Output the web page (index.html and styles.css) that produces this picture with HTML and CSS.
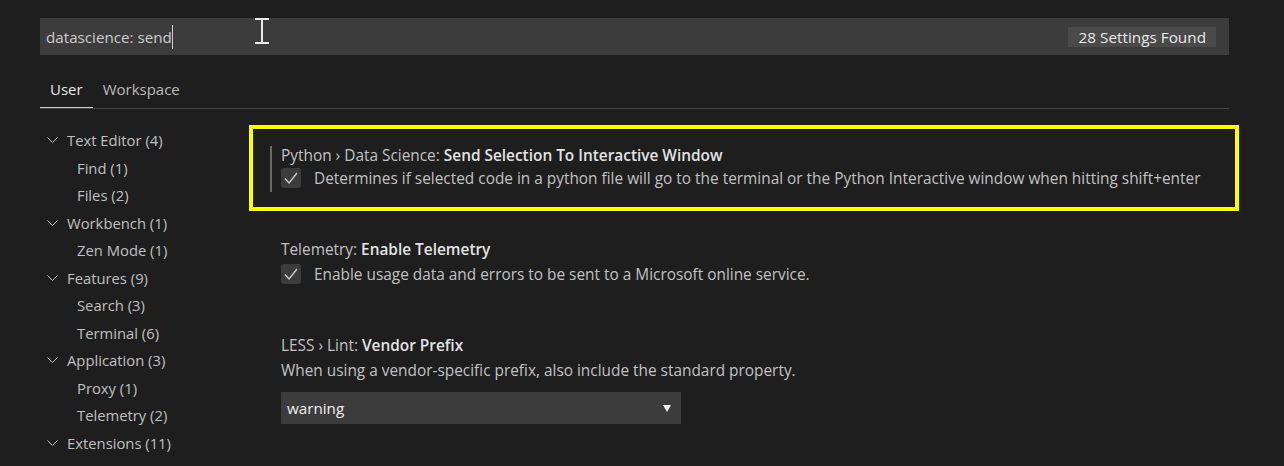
FILE: index.html
```html
<!DOCTYPE html>
<html>
<head>
<meta charset="utf-8">
<link rel="stylesheet" href="styles.css">
</head>
<body>
<div class="editor">
  <div class="search">
    <span class="query">datascience: send</span><span class="caret"></span>
    <span class="count">28 Settings Found</span>
  </div>
  <div class="tabs">
    <span class="tab active">User</span>
    <span class="tab">Workspace</span>
  </div>
  <div class="main">
    <ul class="toc">
      <li class="group"><span class="chev"><svg width="11" height="7" viewBox="0 0 11 7"><polyline points="0.5,0.5 5.5,5.5 10.5,0.5" fill="none" stroke="#c5c5c5" stroke-width="1"/></svg></span>Text Editor (4)</li>
      <li class="child">Find (1)</li>
      <li class="child">Files (2)</li>
      <li class="group"><span class="chev"><svg width="11" height="7" viewBox="0 0 11 7"><polyline points="0.5,0.5 5.5,5.5 10.5,0.5" fill="none" stroke="#c5c5c5" stroke-width="1"/></svg></span>Workbench (1)</li>
      <li class="child">Zen Mode (1)</li>
      <li class="group"><span class="chev"><svg width="11" height="7" viewBox="0 0 11 7"><polyline points="0.5,0.5 5.5,5.5 10.5,0.5" fill="none" stroke="#c5c5c5" stroke-width="1"/></svg></span>Features (9)</li>
      <li class="child">Search (3)</li>
      <li class="child">Terminal (6)</li>
      <li class="group"><span class="chev"><svg width="11" height="7" viewBox="0 0 11 7"><polyline points="0.5,0.5 5.5,5.5 10.5,0.5" fill="none" stroke="#c5c5c5" stroke-width="1"/></svg></span>Application (3)</li>
      <li class="child">Proxy (1)</li>
      <li class="child">Telemetry (2)</li>
      <li class="group"><span class="chev"><svg width="11" height="7" viewBox="0 0 11 7"><polyline points="0.5,0.5 5.5,5.5 10.5,0.5" fill="none" stroke="#c5c5c5" stroke-width="1"/></svg></span>Extensions (11)</li>
    </ul>
    <div class="settings">
      <div class="setting highlight">
        <div class="inner">
          <div class="title">Python › Data Science: <b>Send Selection To Interactive Window</b></div>
          <div class="row">
            <span class="check"><svg width="20" height="20" viewBox="0 0 20 20"><polyline points="4,10.5 8,15 16,5" fill="none" stroke="#d0d0d0" stroke-width="1.3"/></svg></span>
            <span class="desc">Determines if selected code in a python file will go to the terminal or the Python Interactive window when hitting shift+enter</span>
          </div>
        </div>
      </div>
      <div class="setting tele">
        <div class="title">Telemetry: <b>Enable Telemetry</b></div>
        <div class="row">
          <span class="check"><svg width="20" height="20" viewBox="0 0 20 20"><polyline points="4,10.5 8,15 16,5" fill="none" stroke="#d0d0d0" stroke-width="1.3"/></svg></span>
          <span class="desc">Enable usage data and errors to be sent to a Microsoft online service.</span>
        </div>
      </div>
      <div class="setting less">
        <div class="title">LESS › Lint: <b>Vendor Prefix</b></div>
        <div class="desc plain">When using a vendor-specific prefix, also include the standard property.</div>
        <div class="select"><span>warning</span><span class="arrow"></span></div>
      </div>
    </div>
  </div>
</div>
<svg class="ibeam" width="14" height="26" viewBox="0 0 14 26"><path d="M0 1H14M0 25H14M7 1V25" stroke="#ececec" stroke-width="2" fill="none"/></svg>
</body>
</html>
```
FILE: styles.css
```css
* { box-sizing: border-box; }
html, body { margin: 0; padding: 0; }
body {
  background: #1e1e1e;
  width: 1284px;
  height: 466px;
  overflow: hidden;
  font-family: "Open Sans", "Noto Sans", sans-serif;
  font-size: 15px;
  color: #c5c5c5;
  position: relative;
}
.editor {
  margin-left: 40px;
  width: 1189px;
  padding-top: 18px;
}
.search {
  height: 37px;
  background: #3c3c3c;
  display: flex;
  align-items: center;
  padding: 0 13px 0 6px;
  font-size: 15.2px;
  color: #cccccc;
}
.caret {
  display: inline-block;
  width: 1px;
  height: 24px;
  background: #d0d0d0;
}
.count {
  margin-left: auto;
  background: #4a4a4a;
  color: #e8e8e8;
  height: 20px;
  line-height: 20px;
  padding: 0 10px 0 11px;
  font-size: 15.3px;
}
.tabs {
  height: 54px;
  display: flex;
  align-items: flex-end;
  border-bottom: 1px solid #434343;
}
.tab {
  height: 38px;
  line-height: 38px;
  padding: 0 10px;
  font-size: 15px;
  color: #bbbbbb;
}
.tab.active {
  color: #e7e7e7;
  box-shadow: inset 0 -1px 0 #d0d0d0;
}
.main {
  display: flex;
}
.toc {
  list-style: none;
  margin: 0;
  padding: 18px 0 0 0;
  width: 209px;
  flex: none;
}
.toc li {
  height: 27.5px;
  line-height: 27.5px;
  font-size: 14.8px;
  color: #c0c0c0;
  display: flex;
  align-items: center;
  white-space: nowrap;
}
.toc .group { padding-left: 7px; }
.toc .child { padding-left: 37px; }
.chev {
  width: 20px;
  display: flex;
  align-items: center;
}
.settings {
  flex: 1;
  padding-top: 16px;
}
.setting .title {
  height: 20px;
  line-height: 20px;
  font-size: 15.4px;
  color: #c2c2c2;
  white-space: nowrap;
}
.setting .title b {
  color: #e4e4e4;
  font-weight: 600;
}
.row {
  display: flex;
  align-items: center;
  margin-top: 2px;
  height: 20px;
}
.check {
  width: 20px;
  height: 20px;
  border-radius: 3px;
  background: #3c3c3c;
  display: flex;
  margin-right: 13px;
}
.desc {
  font-size: 15.4px;
  color: #c2c2c2;
  white-space: nowrap;
}
.highlight {
  width: 990px;
  height: 86px;
  border: 4px solid #ffff00;
  padding: 17px 0 0 17px;
}
.highlight .inner {
  border-left: 2px solid #6a6a6a;
  padding-left: 9px;
  height: 46px;
}
.tele {
  padding: 29px 0 0 32px;
}
.tele .row { margin-top: 4px; }
.less {
  padding: 52px 0 0 32px;
}
.desc.plain {
  margin-top: 5px;
  height: 20px;
  line-height: 20px;
}
.select {
  margin-top: 11px;
  width: 400px;
  height: 32px;
  background: #3c3c3c;
  display: flex;
  align-items: center;
  padding: 0 10px 0 6px;
  font-size: 15.2px;
  color: #f0f0f0;
}
.arrow {
  margin-left: auto;
  width: 0;
  height: 0;
  border-left: 4px solid transparent;
  border-right: 4px solid transparent;
  border-top: 7px solid #f0f0f0;
}
.ibeam {
  position: absolute;
  left: 255px;
  top: 18px;
}
```
